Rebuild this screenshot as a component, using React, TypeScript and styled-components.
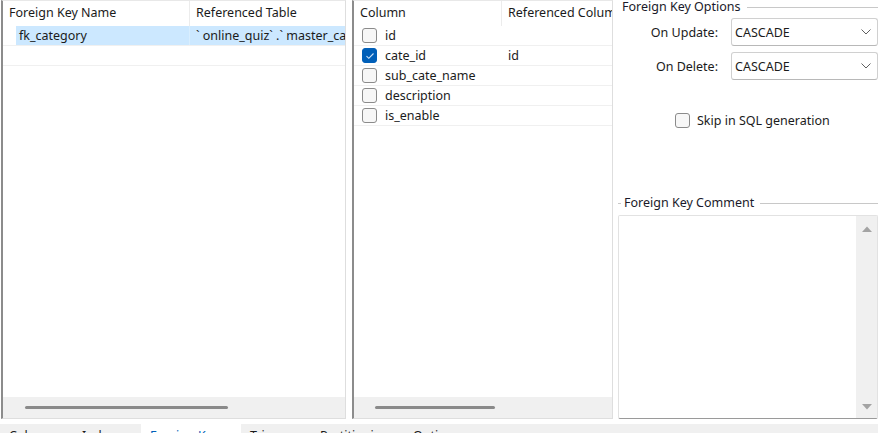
import React from "react";
import styled, { createGlobalStyle } from "styled-components";

const Global = createGlobalStyle`
  html, body { margin: 0; padding: 0; background: #ffffff; }
  body { font-family: "Noto Sans", "Open Sans", sans-serif; font-size: 12.5px; color: #1b1b1b; }
  * { box-sizing: border-box; }
`;

const Root = styled.div`
  width: 878px;
  height: 433px;
  overflow: hidden;
  background: #ffffff;
  display: flex;
  flex-direction: column;
`;

const Main = styled.div`
  display: flex;
  height: 419px;
  padding-left: 1px;
`;

const Panel = styled.div<{ $w: number; $ml: number }>`
  width: ${(p) => p.$w}px;
  margin-left: ${(p) => p.$ml}px;
  flex: none;
  height: 419px;
  display: flex;
  flex-direction: column;
  border-left: 2px solid #8c8c8c;
  border-right: 1px solid #dedede;
  border-bottom: 1px solid #dedede;
  border-top: 1px solid #e8e8e8;
  background: #ffffff;
`;

const HeaderRow = styled.div`
  display: flex;
  height: 25px;
  align-items: center;
  flex: none;
`;

const HeaderCell = styled.div<{ $w?: number }>`
  width: ${(p) => (p.$w ? `${p.$w}px` : "auto")};
  flex: ${(p) => (p.$w ? "none" : "1")};
  height: 25px;
  line-height: 24px;
  padding-left: 6px;
  white-space: nowrap;
  overflow: hidden;
  border-right: ${(p) => (p.$w ? "1px solid #ececec" : "none")};
`;

const Body = styled.div`
  flex: 1;
  display: flex;
  flex-direction: column;
`;

const Row = styled.div<{ $indent?: number }>`
  display: flex;
  height: 20px;
  flex: none;
  border-bottom: 1px solid #f0f0f0;
  padding-left: ${(p) => p.$indent ?? 0}px;
`;

const Cell = styled.div<{ $w?: number; $sel?: boolean; $pl?: number }>`
  width: ${(p) => (p.$w ? `${p.$w}px` : "auto")};
  flex: ${(p) => (p.$w ? "none" : "1")};
  height: 19px;
  line-height: 19px;
  padding-left: ${(p) => p.$pl ?? 6}px;
  white-space: nowrap;
  overflow: hidden;
  display: flex;
  align-items: center;
  gap: 8px;
  background: ${(p) => (p.$sel ? "#cce8ff" : "transparent")};
  border-right: ${(p) => (p.$w && p.$sel ? "1px solid #d9eefe" : "none")};
`;

const HScroll = styled.div<{ $left: number; $len: number }>`
  height: 21px;
  flex: none;
  background: #f0f0f0;
  position: relative;
  &::after {
    content: "";
    position: absolute;
    left: ${(p) => p.$left}px;
    width: ${(p) => p.$len}px;
    top: 9px;
    height: 3px;
    border-radius: 2px;
    background: #8a8a8a;
  }
`;

const Box = styled.span<{ $checked?: boolean }>`
  width: 15px;
  height: 15px;
  flex: none;
  border-radius: 3px;
  border: 1px solid ${(p) => (p.$checked ? "#005fb8" : "#8b8b8b")};
  background: ${(p) => (p.$checked ? "#005fb8" : "#f7f7f7")};
  display: inline-flex;
  align-items: center;
  justify-content: center;
`;

const Check = ({ checked }: { checked?: boolean }) => (
  <Box $checked={checked}>
    {checked && (
      <svg width="10" height="8" viewBox="0 0 10 8">
        <path d="M1.5 4.2 L3.8 6.3 L8.5 1.5" fill="none" stroke="#cfe3f7" strokeWidth="1.1" />
      </svg>
    )}
  </Box>
);

const Side = styled.div`
  flex: 1;
  margin-left: 5px;
  display: flex;
  flex-direction: column;
`;

const Legend = styled.div<{ $dash?: boolean; $pl?: number }>`
  display: flex;
  align-items: center;
  height: 14px;
  line-height: 14px;
  white-space: nowrap;
  color: #1a1a2a;
  padding-left: ${(p) => p.$pl ?? 0}px;
  &::before {
    content: "";
    width: ${(p) => (p.$dash ? "3px" : "0")};
    margin-right: ${(p) => (p.$dash ? "3px" : "0")};
    height: 1px;
    background: #c8c8c8;
  }
  &::after {
    content: "";
    flex: 1;
    height: 1px;
    background: #c8c8c8;
    margin-left: 6px;
  }
`;

const FormGrid = styled.div`
  display: grid;
  grid-template-columns: 100px 1fr;
  row-gap: 6px;
  column-gap: 13px;
  margin-top: 4px;
  align-items: center;
`;

const Label = styled.div`
  text-align: right;
  white-space: nowrap;
`;

const Select = styled.div`
  height: 28px;
  border: 1px solid #d0d0d0;
  border-bottom-color: #b8b8b8;
  border-radius: 3px;
  background: #ffffff;
  display: flex;
  align-items: center;
  justify-content: space-between;
  padding: 0 6px 0 3px;
`;

const Chevron = () => (
  <svg width="10" height="6" viewBox="0 0 10 6">
    <path d="M0.5 0.5 L5 5 L9.5 0.5" fill="none" stroke="#606060" strokeWidth="1" />
  </svg>
);

const SkipRow = styled.label`
  display: flex;
  align-items: center;
  gap: 7px;
  margin-top: 32px;
  margin-left: 57px;
  height: 16px;
`;

const CommentSection = styled.div`
  margin-top: 68px;
  display: flex;
  flex-direction: column;
  flex: 1;
`;

const TextArea = styled.div`
  margin-top: 5px;
  flex: 1;
  border: 1px solid #e2e2e2;
  border-bottom: 1px solid #9a9a9a;
  border-radius: 2px;
  display: flex;
  background: #ffffff;
`;

const TextBody = styled.div`
  flex: 1;
`;

const VScroll = styled.div`
  width: 21px;
  background: #f0f0f0;
  display: flex;
  flex-direction: column;
  justify-content: space-between;
  align-items: center;
  padding: 10px 0 8px;
`;

const Arrow = ({ up }: { up?: boolean }) => (
  <svg width="10" height="6" viewBox="0 0 10 6">
    <path d={up ? "M0 6 L5 0.5 L10 6 Z" : "M0 0 L5 5.5 L10 0 Z"} fill="#a3a3a3" />
  </svg>
);

const TabBar = styled.div`
  margin-top: 5px;
  height: 9px;
  display: flex;
  background: #f0f0f0;
`;

const Tab = styled.div<{ $active?: boolean; $w: number }>`
  width: ${(p) => p.$w}px;
  flex: none;
  padding-left: 9px;
  padding-top: 3px;
  white-space: nowrap;
  background: ${(p) => (p.$active ? "#ffffff" : "transparent")};
  color: ${(p) => (p.$active ? "#005fb8" : "#1b1b1b")};
`;

export default function App() {
  const cols = [
    { name: "id" },
    { name: "cate_id", ref: "id", checked: true },
    { name: "sub_cate_name" },
    { name: "description" },
    { name: "is_enable" },
  ];
  return (
    <Root>
      <Global />
      <Main>
        <Panel $w={345} $ml={0}>
          <HeaderRow>
            <HeaderCell $w={187}>Foreign Key Name</HeaderCell>
            <HeaderCell>Referenced Table</HeaderCell>
          </HeaderRow>
          <Body>
            <Row $indent={13}>
              <Cell $w={174} $sel $pl={3}>fk_category</Cell>
              <Cell $sel>` online_quiz` .` master_category`</Cell>
            </Row>
            <Row />
          </Body>
          <HScroll $left={22} $len={203} />
        </Panel>
        <Panel $w={261} $ml={6}>
          <HeaderRow>
            <HeaderCell $w={148}>Column</HeaderCell>
            <HeaderCell>Referenced Column</HeaderCell>
          </HeaderRow>
          <Body>
            {cols.map((c) => (
              <Row key={c.name}>
                <Cell $w={148} $pl={8}>
                  <Check checked={c.checked} />
                  {c.name}
                </Cell>
                <Cell>{c.ref ?? ""}</Cell>
              </Row>
            ))}
          </Body>
          <HScroll $left={21} $len={120} />
        </Panel>
        <Side>
          <Legend $pl={4}>Foreign Key Options</Legend>
          <FormGrid>
            <Label>On Update:</Label>
            <Select>
              <span>CASCADE</span>
              <Chevron />
            </Select>
            <Label>On Delete:</Label>
            <Select>
              <span>CASCADE</span>
              <Chevron />
            </Select>
          </FormGrid>
          <SkipRow>
            <Check />
            <span>Skip in SQL generation</span>
          </SkipRow>
          <CommentSection>
            <Legend $dash>Foreign Key Comment</Legend>
            <TextArea>
              <TextBody />
              <VScroll>
                <Arrow up />
                <Arrow />
              </VScroll>
            </TextArea>
          </CommentSection>
        </Side>
      </Main>
      <TabBar>
        <Tab $w={73}>Columns</Tab>
        <Tab $w={68}>Indexes</Tab>
        <Tab $w={100} $active>Foreign Keys</Tab>
        <Tab $w={70}>Triggers</Tab>
        <Tab $w={93}>Partitioning</Tab>
        <Tab $w={80}>Options</Tab>
      </TabBar>
    </Root>
  );
}
